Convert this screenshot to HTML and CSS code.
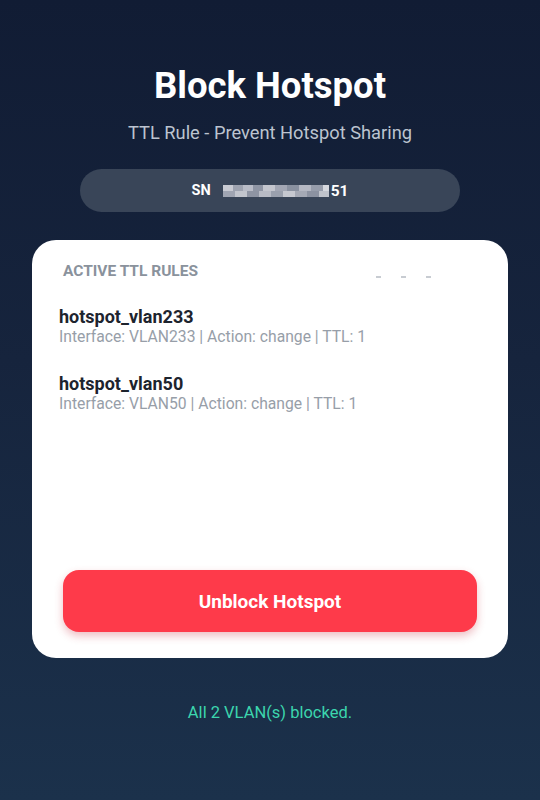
FILE: index.html
```html
<!doctype html>
<html lang="en">
  <head>
    <meta charset="UTF-8" />
    <meta name="viewport" content="width=device-width, initial-scale=1.0">
    <title>Block Hotspot</title>
    <link rel="stylesheet" href="styles.css">
  </head>
  <body>
    <div class="page">
      <h1 class="title">Block Hotspot</h1>
      <p class="subtitle">TTL Rule - Prevent Hotspot Sharing</p>

      <div class="sn-pill">
        <span class="sn-label">SN</span>
        <span class="sn-value"><span class="sn-blur"></span>51</span>
      </div>

      <div class="card">
        <div class="card-head">
          <span class="section-title">ACTIVE TTL RULES</span>
          <span class="marks"><i></i><i></i><i></i></span>
        </div>

        <div class="rules">
          <div class="rule">
            <div class="rule-name">hotspot_vlan233</div>
            <div class="rule-info">Interface: VLAN233 | Action: change | TTL: 1</div>
          </div>
          <div class="rule">
            <div class="rule-name">hotspot_vlan50</div>
            <div class="rule-info">Interface: VLAN50 | Action: change | TTL: 1</div>
          </div>
        </div>

        <button class="unblock-btn">Unblock Hotspot</button>
      </div>

      <p class="status">All 2 VLAN(s) blocked.</p>
    </div>
  </body>
</html>
```

FILE: styles.css
```css
html,
body {
  height: 100%;
}
body {
  font-family: Roboto, "Noto Sans", sans-serif;
  margin: 0;
  background: linear-gradient(180deg, #111c34 0%, #16243d 45%, #1b314b 100%);
  color: white;
}
.page {
  display: flex;
  flex-direction: column;
  align-items: center;
  padding-top: 64px;
}
.title {
  margin: 0;
  font-size: 36.5px;
  font-weight: 700;
  line-height: 44px;
}
.subtitle {
  margin: 13px 0 0;
  font-size: 18.3px;
  line-height: 24px;
  color: #bcc4d0;
}
.sn-pill {
  margin-top: 24px;
  width: 380px;
  height: 43px;
  border-radius: 22px;
  background-color: #394558;
  display: flex;
  justify-content: center;
  align-items: center;
  gap: 12px;
  font-size: 14.5px;
  font-weight: 700;
}
.sn-value {
  display: flex;
  align-items: center;
  gap: 2px;
  font-size: 15.5px;
}
.sn-blur {
  display: inline-block;
  width: 106px;
  height: 12px;
  background:
    linear-gradient(90deg, #c9cbd3 0 10px, #9ea3b0 10px 20px, #b9bcc7 20px 30px, #8f95a4 30px 40px, #c4c6ce 40px 52px, #a3a7b4 52px 64px, #8a91a0 64px 76px, #b5b8c3 76px 88px, #979dab 88px 100px, #d6d8de 100px 106px) top / 100% 6px no-repeat,
    linear-gradient(90deg, #a0a5b2 0 12px, #c2c5cd 12px 24px, #8e94a3 24px 36px, #b8bbc5 36px 48px, #9aa0ad 48px 60px, #c6c8d0 60px 72px, #a5a9b5 72px 84px, #8c92a1 84px 96px, #c0c3cb 96px 106px) bottom / 100% 6px no-repeat;
}
.card {
  margin-top: 28px;
  width: 476px;
  box-sizing: border-box;
  background-color: white;
  border-radius: 24px;
  padding: 22px 31px 26px;
  color: #1f2732;
}
.card-head {
  display: flex;
  justify-content: space-between;
  align-items: center;
}
.section-title {
  font-size: 15.5px;
  font-weight: 700;
  color: #8a929c;
  line-height: 18px;
}
.marks {
  display: flex;
  gap: 20px;
  margin-right: 46px;
  margin-top: 12px;
}
.marks i {
  display: block;
  width: 5px;
  height: 2px;
  background-color: #c8ccd2;
}
.rules {
  margin: 26px 0 0 -4px;
  display: flex;
  flex-direction: column;
  gap: 27px;
}
.rule-name {
  font-size: 18px;
  font-weight: 700;
  line-height: 22px;
  color: #1d242e;
}
.rule-info {
  font-size: 15.7px;
  line-height: 18px;
  color: #979ea8;
}
.unblock-btn {
  display: block;
  width: 100%;
  height: 62px;
  margin-top: 157px;
  border: none;
  border-radius: 16px;
  background-color: #fe3a4a;
  color: white;
  font-family: inherit;
  font-size: 19px;
  font-weight: 700;
  box-shadow: 0 4px 8px rgba(200, 40, 55, 0.3);
  cursor: pointer;
}
.status {
  margin: 45px 0 0;
  font-size: 16.5px;
  color: #3cd6ae;
}
```
